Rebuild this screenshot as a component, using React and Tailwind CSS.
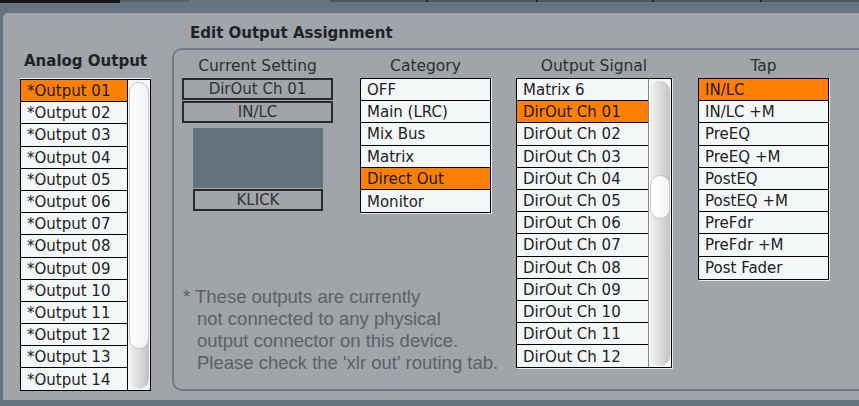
import React from "react";

const analog = [
  "*Output 01", "*Output 02", "*Output 03", "*Output 04", "*Output 05",
  "*Output 06", "*Output 07", "*Output 08", "*Output 09", "*Output 10",
  "*Output 11", "*Output 12", "*Output 13", "*Output 14",
];
const categories = ["OFF", "Main (LRC)", "Mix Bus", "Matrix", "Direct Out", "Monitor"];
const signals = [
  "Matrix 6", "DirOut Ch 01", "DirOut Ch 02", "DirOut Ch 03", "DirOut Ch 04",
  "DirOut Ch 05", "DirOut Ch 06", "DirOut Ch 07", "DirOut Ch 08", "DirOut Ch 09",
  "DirOut Ch 10", "DirOut Ch 11", "DirOut Ch 12",
];
const taps = ["IN/LC", "IN/LC +M", "PreEQ", "PreEQ +M", "PostEQ", "PostEQ +M", "PreFdr", "PreFdr +M", "Post Fader"];

function Rows({ items, selected, last = true }) {
  return items.map((t, i) => (
    <div
      key={t}
      className={`h-[22.2px] shrink-0 flex items-center pl-[6px] pt-[2px] text-[15px] leading-none whitespace-nowrap ${
        i < items.length - 1 || last ? "border-b border-black" : ""
      } ${t === selected ? "bg-[#ff8000] text-[#1a1a1a]" : "text-[#222]"}`}
    >
      {t}
    </div>
  ));
}

function ScrollTrack({ thumbTop, thumbH }) {
  return (
    <div className="flex-1 px-[1px] pt-[2px] pb-[1px] bg-[#f4f7f8] flex">
      <div className="relative flex-1 rounded-full bg-gradient-to-r from-[#f2f2f2] via-[#dcdcdc] to-[#c2c2c2]">
        <div
          className="absolute left-0 right-0 rounded-full bg-gradient-to-r from-white to-[#f4f4f4] border border-[#c8c8c8]"
          style={{ top: thumbTop, height: thumbH }}
        />
      </div>
    </div>
  );
}

function Header({ children }) {
  return (
    <div className="h-[18px] flex items-center justify-center text-[15.5px] text-[#2b3035] whitespace-nowrap">
      {children}
    </div>
  );
}

function SettingBox({ children, className = "" }) {
  return (
    <div className={`h-[22px] flex items-center justify-center border-2 border-[#2a2a2a] text-[15px] text-[#2e3236] ${className}`}>
      {children}
    </div>
  );
}

export default function App() {
  return (
    <div
      className="w-[859px] h-[406px] bg-[#657481] overflow-hidden flex flex-col"
      style={{ fontFamily: '"DejaVu Sans", Verdana, sans-serif' }}
    >
      {/* top tab strip */}
      <div className="h-[13px] shrink-0 flex items-start">
        <div className="w-[120px] h-[3px] bg-[#141719]" />
        <div className="w-[70px] h-[2px] bg-[#55626d]" />
        <div className="w-[140px]" />
        <div className="flex-1 h-[2px] bg-[#48555f] flex">
          <div className="w-[98px] border-r-2 border-[#222]" />
          <div className="w-[110px] border-r-2 border-[#222]" />
          <div className="w-[116px] border-r-2 border-[#222]" />
          <div className="w-[108px] border-r-2 border-[#222]" />
        </div>
      </div>

      {/* main panel */}
      <div className="ml-[3px] h-[387px] shrink-0 bg-[#a1a4a8] rounded-tl-[5px] flex pl-[17px]">
        {/* analog output column */}
        <div className="w-[131px] shrink-0 pt-[38px] flex flex-col">
          <div className="h-[20px] flex items-center justify-center font-bold text-[15px] text-[#1e2226] whitespace-nowrap">
            Analog Output
          </div>
          <div className="mt-[8px] h-[312px] border border-black bg-[#f4f7f8] flex overflow-hidden shadow-[0_-1px_0_#f4f4f4]">
            <div className="w-[107px] flex flex-col border-r border-black">
              <Rows items={analog} selected="*Output 01" />
            </div>
            <ScrollTrack thumbTop={0} thumbH={267} />
          </div>
        </div>

        {/* edit output assignment */}
        <div className="ml-[21px] flex flex-col">
          <div className="h-[35px] pt-[10px] pl-[18px] font-bold text-[15px] leading-[20px] text-[#1e2226] whitespace-nowrap">
            Edit Output Assignment
          </div>
          <div className="w-[720px] h-[343px] border-2 border-[#6f7c87] rounded-[10px] pl-[8px] pt-[8px] flex">
            {/* current setting + category + note */}
            <div className="w-[309px] shrink-0 flex flex-col">
              <div className="flex">
                <div className="w-[151px] shrink-0 flex flex-col">
                  <Header>Current Setting</Header>
                  <div className="mt-[2px] flex flex-col">
                    <SettingBox>DirOut Ch 01</SettingBox>
                    <SettingBox className="mt-[1px]">IN/LC</SettingBox>
                  </div>
                  <div className="ml-[11px] w-[130px] flex flex-col mt-[5px]">
                    <div className="h-[60px] bg-[#64727e]" />
                    <SettingBox className="mt-[1px]">KLICK</SettingBox>
                  </div>
                </div>
                <div className="ml-[27px] w-[131px] shrink-0 flex flex-col">
                  <Header>Category</Header>
                  <div className="mt-[2px] border border-black bg-[#f4f7f8] flex flex-col shadow-[1px_1px_0_#e9ecee]">
                    <Rows items={categories} selected="Direct Out" last={false} />
                  </div>
                </div>
              </div>
              <div
                className="mt-[73px] text-[18.5px] leading-[22px] text-[#5b6166] whitespace-nowrap"
                style={{ fontFamily: '"Liberation Sans", Arial, sans-serif' }}
              >
                <div className="pl-[1px]">* These outputs are currently</div>
                <div className="pl-[15px]">not connected to any physical</div>
                <div className="pl-[15px]">output connector on this device.</div>
                <div className="pl-[15px]">Please check the 'xlr out' routing tab.</div>
              </div>
            </div>

            {/* output signal */}
            <div className="ml-[25px] w-[156px] shrink-0 flex flex-col">
              <Header>Output Signal</Header>
              <div className="mt-[2px] h-[290px] border border-black bg-[#f4f7f8] flex overflow-hidden shadow-[1px_1px_0_#e9ecee]">
                <div className="w-[132px] flex flex-col border-r border-[#888]">
                  <Rows items={signals} selected="DirOut Ch 01" last={false} />
                </div>
                <ScrollTrack thumbTop={94} thumbH={44} />
              </div>
            </div>

            {/* tap */}
            <div className="ml-[26px] w-[131px] shrink-0 flex flex-col">
              <Header>Tap</Header>
              <div className="mt-[2px] border border-black bg-[#f4f7f8] flex flex-col shadow-[1px_1px_0_#e9ecee]">
                <Rows items={taps} selected="IN/LC" last={false} />
              </div>
            </div>
          </div>
        </div>
      </div>
    </div>
  );
}
